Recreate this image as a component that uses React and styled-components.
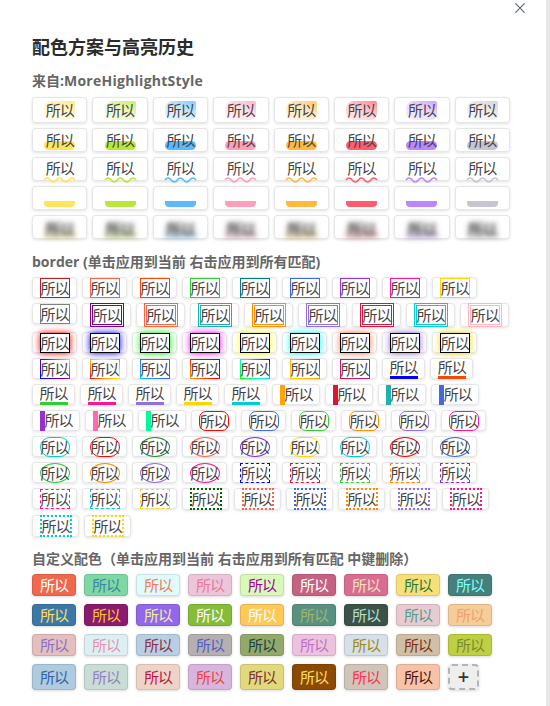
import React from 'react'
import styled, { createGlobalStyle, css } from 'styled-components'

const GlobalStyle = createGlobalStyle`
  html, body { margin: 0; padding: 0; height: 706px; overflow: hidden; background: #fff; }
  body { font-family: "Open Sans", "Noto Sans CJK SC", sans-serif; color: #333; }
`

const LABEL = '所以'
const PALETTE = ['#ffe45c', '#b8e63a', '#5cb8ff', '#ff9ebb', '#ffb93f', '#ff5c6c', '#bd85ff', '#c6c6d0']

const BORDERS = [
  ['solid', '#b22222'], ['solid', '#ff6347'], ['solid', '#ff4500'], ['solid', '#32cd32'], ['solid', '#008080'],
  ['solid', '#4169e1'], ['solid', '#9932e0'], ['solid', '#ff1493'], ['solid', '#ffd700'],
  ['solid', '#808080'], ['double', '#800080'], ['double', '#ff6347'], ['double', '#20b2aa'], ['double', '#ff8c00'],
  ['double', '#9370db'], ['double', '#dc143c'], ['double', '#00ced1'], ['double', '#ffb6c1'],
  ['glow', '#ff0000'], ['glow', '#0000ff'], ['glow', '#00ff00'], ['glow', '#ff00ff'], ['glow', '#ffff00'],
  ['glow', '#00ffff'], ['glow', '#ff7f50'], ['glow', '#9370db'], ['glow', '#ffd700'],
  ['image', 'linear-gradient(45deg, #0000ff, #800080, #ffc0cb)'],
  ['image', 'linear-gradient(45deg, #ff0000, #ffa500, #ffff00, #00ff00)'],
  ['image', 'linear-gradient(45deg, #00bfff, #4169e1, #ff1493)'],
  ['image', 'linear-gradient(45deg, #ffa500, #ff0000, #800080)'],
  ['image', 'linear-gradient(45deg, #00ff00, #00ffff, #0000ff)'],
  ['image', 'linear-gradient(45deg, #ffd700, #ffa500, #ff0000)'],
  ['image', 'linear-gradient(45deg, #dc143c, #8a2be2)'],
  ['under', '#0000ff'], ['under', '#ff4500'], ['under', '#32cd32'], ['under', '#ff1493'], ['under', '#9370db'],
  ['under', '#ffd700'], ['under', '#00ced1'],
  ['left', '#ffa500'], ['left', '#dc143c'], ['left', '#20b2aa'], ['left', '#4169e1'],
  ['left', '#9932cc'], ['left', '#ff69b4'], ['left', '#00fa9a'],
  ['round', '#ff0000'], ['round', '#4169e1'], ['round', '#32cd32'], ['round', '#ff8c00'], ['round', '#9370db'], ['round', '#ff1493'],
  ['pill', '#00ced1'], ['pill', '#ff0000'], ['oval', '#228b22'], ['oval', '#ff6347'], ['oval', '#8a2be2'],
  ['pill', '#ffd700'], ['pill', '#00ced1'], ['oval', '#ff0000'], ['oval', '#4169e1'],
  ['oval', '#32cd32'], ['oval', '#ff8c00'], ['oval', '#9370db'], ['oval', '#ff1493'],
  ['dashed', '#0000ff'], ['dashed', '#dc143c'], ['dashed', '#32cd32'], ['dashed', '#ff8c00'], ['dashed', '#8a2be2'],
  ['dashed', '#ff1493'], ['dashed', '#00ced1'], ['dashed', '#ffd700'],
  ['dotted', '#006400'], ['dotted', '#ff6347'], ['dotted', '#4169e1'], ['dotted', '#ff8c00'], ['dotted', '#9370db'],
  ['dotted', '#ff1493'], ['dotted', '#00ced1'], ['dotted', '#ffd700'],
]

const CUSTOM = [
  ['#f0694d', '#ffffff'], ['#7dd8a5', '#3a85a0'], ['#e0fbfb', '#f07a5a'], ['#ebc5da', '#e8799a'], ['#d9f9b9', '#a000a0'],
  ['#c46282', '#ffffff'], ['#d96d90', '#f0e0c0'], ['#f8df78', '#2a7a3a'], ['#45807d', '#80ffff'],
  ['#3b78a6', '#ffe060'], ['#8a1a70', '#ffc820'], ['#9168ea', '#f0f0a0'], ['#86bc3a', '#ffffff'], ['#ffc957', '#ffffff'],
  ['#5a9080', '#9cb870'], ['#3b5248', '#b8e0d0'], ['#e8cbd1', '#5a9a8a'], ['#f5cd98', '#f0a070'],
  ['#e4bfbf', '#8a70c0'], ['#dcf0f3', '#e890b0'], ['#b9cee2', '#8a3040'], ['#b5afb2', '#5060c0'], ['#93a96b', '#204040'],
  ['#ecc2df', '#c070c0'], ['#d7e0e8', '#9a8a10'], ['#cebfa6', '#803010'], ['#bfcf42', '#7a8a30'],
  ['#aecbe0', '#3060a0'], ['#cadcd6', '#9080c0'], ['#eed3c8', '#c01040'], ['#d7b5dd', '#f04040'], ['#e2d97c', '#7a3030'],
  ['#8c4a00', '#ffe060'], ['#d1c5b9', '#ff3050'], ['#f7c2a7', '#501000'],
]

const Page = styled.div`
  display: flex;
  width: 550px;
  height: 706px;
`

const Panel = styled.main`
  flex: 1;
  min-width: 0;
  padding: 0 36px 0 32px;
`

const Scrollbar = styled.div`
  width: 4px;
  background: #e8e8e8;
`

const TopBar = styled.div`
  display: flex;
  justify-content: flex-end;
  height: 35px;
  padding: 3px 0 0;
  margin-right: -15px;
  box-sizing: border-box;
  color: #5f6d7a;
`

const Title = styled.h1`
  margin: 0 0 12px;
  font-size: 18px;
  line-height: 24px;
  font-weight: 700;
  color: #2b2b2b;
`

const Heading = styled.h2`
  margin: ${p => p.$top || 0}px 0 ${p => p.$bottom}px;
  font-size: 14px;
  line-height: 20px;
  font-weight: 700;
  color: #666;
`

const SourceName = styled.span`
  letter-spacing: 0.25px;
`

const HighlightGrid = styled.div`
  display: grid;
  grid-template-columns: repeat(8, 1fr);
  gap: 5px;
`

const BorderList = styled.div`
  display: flex;
  flex-wrap: wrap;
  gap: 5px;
`

const CustomList = styled.div`
  display: flex;
  flex-wrap: wrap;
  gap: 8px;
`

const Chip = styled.div`
  display: flex;
  justify-content: center;
  align-items: center;
  height: ${p => p.$h}px;
  padding: 0 7.5px;
  background: #fff;
  border-radius: 4px;
  box-shadow: inset 0 0 0 1px #e6e6e6, 0 1px 3px rgba(0, 0, 0, 0.12);
  font-size: 15px;
  letter-spacing: -1px;
  color: #444;
`

const highlightKinds = {
  tint: css`
    height: 19px;
    line-height: 19px;
    margin-top: 4px;
    border-radius: 8px 2px 6px 7px;
    background: linear-gradient(205deg, ${p => p.$c}c0 0%, ${p => p.$c}48 50%, ${p => p.$c}20 100%);
  `,
  half: css`
    height: 19px;
    line-height: 19px;
    margin-top: 3px;
    &::before {
      content: '';
      position: absolute;
      z-index: -1;
      left: 0;
      right: 0;
      bottom: 0;
      height: 9px;
      border-radius: 5px;
      background: ${p => p.$c};
    }
  `,
  wave: css`
    height: 19px;
    line-height: 19px;
    margin-top: 2px;
  `,
  bar: css`
    height: 21px;
    line-height: 19px;
    color: transparent;
    &::before {
      content: '';
      position: absolute;
      left: 0;
      right: 0;
      bottom: 0;
      height: 6px;
      border-radius: 0 0 4px 4px;
      background: ${p => p.$c};
    }
  `,
  blur: css`
    height: 16px;
    line-height: 16px;
    margin-top: 6px;
    color: transparent;
    text-shadow: 0 0 4px #555, 0 0 6px #555;
    &::before {
      content: '';
      position: absolute;
      z-index: -1;
      left: 0;
      right: 0;
      bottom: 0;
      height: 5px;
      background: ${p => p.$c};
      opacity: 0.45;
      filter: blur(3px);
    }
  `,
}

const Highlight = styled.span`
  position: relative;
  z-index: 0;
  align-self: flex-start;
  width: 31px;
  text-align: center;
  ${p => highlightKinds[p.$kind]}
`

const Wave = styled.svg`
  position: absolute;
  left: 0;
  top: 17px;
  width: 31px;
  height: 6px;
  overflow: visible;
`

const borderKinds = {
  solid: css`border: 1px solid ${p => p.$c};`,
  double: css`
    height: 24px;
    border: 3px double ${p => p.$c};
    line-height: 18px;
  `,
  glow: css`
    border: 1px solid #000;
    box-shadow: 0 0 7px ${p => p.$c};
  `,
  image: css`
    border: 1px solid transparent;
    border-image: ${p => p.$c} 1;
  `,
  under: css`
    border-bottom: 3px solid ${p => p.$c};
    height: 21px;
    line-height: 19px;
  `,
  left: css`
    border-left: 5px solid ${p => p.$c};
    height: 20px;
  `,
  round: css`
    border: 1px solid ${p => p.$c};
    border-radius: 7px;
  `,
  pill: css`
    border: 1px solid ${p => p.$c};
    border-radius: 10px;
  `,
  oval: css`
    border: 1px solid ${p => p.$c};
    border-radius: 50%;
  `,
  dashed: css`border: 1px dashed ${p => p.$c};`,
  dotted: css`
    height: 22px;
    border: 2px dotted ${p => p.$c};
    line-height: 18px;
  `,
}

const BorderMark = styled.span`
  box-sizing: border-box;
  height: 20px;
  line-height: 18px;
  white-space: nowrap;
  ${p => borderKinds[p.$kind]}
`

const CustomChip = styled.div`
  box-sizing: border-box;
  width: 44px;
  min-height: 22px;
  display: flex;
  align-items: center;
  justify-content: center;
  border: 1px solid rgba(0, 0, 0, 0.1);
  border-radius: 4px;
  background: ${p => p.$bg};
  color: ${p => p.$fg};
  font-size: 15px;
  line-height: 20px;
  letter-spacing: -1px;
  box-shadow: 0 1px 3px rgba(0, 0, 0, 0.15);
`

const AddChip = styled.div`
  box-sizing: border-box;
  width: 31px;
  height: 26px;
  display: flex;
  align-items: center;
  justify-content: center;
  border: 2px dashed #b4b4b4;
  border-radius: 4px;
  background: #eee;
  color: #333;
  font-size: 20px;
  line-height: 1;
  font-weight: 600;
  box-shadow: 0 1px 3px rgba(0, 0, 0, 0.15);
`

function CloseIcon() {
  return (
    <svg width="10" height="10" viewBox="0 0 10 10" fill="none" stroke="currentColor" strokeWidth="1.2">
      <path d="M0.3 0.3 9.7 9.7M9.7 0.3 0.3 9.7" />
    </svg>
  )
}

function HighlightChip({ kind, color }) {
  return (
    <Chip $h={kind === 'tint' ? 26 : 24}>
      <Highlight $kind={kind} $c={color}>
        {LABEL}
        {kind === 'wave' && (
          <Wave viewBox="0 0 31 6" fill="none" stroke={color} strokeWidth="1.6">
            <path d="M0 4q3.1-4 6.2 0t6.2 0 6.2 0 6.2 0 6.2 0" />
          </Wave>
        )}
      </Highlight>
    </Chip>
  )
}

function BorderChip({ kind, color }) {
  const h = kind === 'double' ? 24 : kind === 'dotted' ? 22 : 21
  return (
    <Chip $h={h}>
      <BorderMark $kind={kind} $c={color}>{LABEL}</BorderMark>
    </Chip>
  )
}

export default function App() {
  const kinds = ['tint', 'half', 'wave', 'bar', 'blur']
  return (
    <Page>
      <GlobalStyle />
      <Panel>
        <TopBar><CloseIcon /></TopBar>
        <Title>配色方案与高亮历史</Title>

        <Heading $bottom={6}>来自:<SourceName>MoreHighlightStyle</SourceName></Heading>
        <HighlightGrid>
          {kinds.map(kind => PALETTE.map(color => (
            <HighlightChip key={kind + color} kind={kind} color={color} />
          )))}
        </HighlightGrid>

        <Heading $top={13} $bottom={5}>border (单击应用到当前 右击应用到所有匹配)</Heading>
        <BorderList>
          {BORDERS.map(([kind, color], i) => (
            <BorderChip key={i} kind={kind} color={color} />
          ))}
        </BorderList>

        <Heading $top={12} $bottom={5}>自定义配色（单击应用到当前 右击应用到所有匹配 中键删除）</Heading>
        <CustomList>
          {CUSTOM.map(([bg, fg], i) => (
            <CustomChip key={i} $bg={bg} $fg={fg}>{LABEL}</CustomChip>
          ))}
          <AddChip>+</AddChip>
        </CustomList>
      </Panel>
      <Scrollbar />
    </Page>
  )
}
